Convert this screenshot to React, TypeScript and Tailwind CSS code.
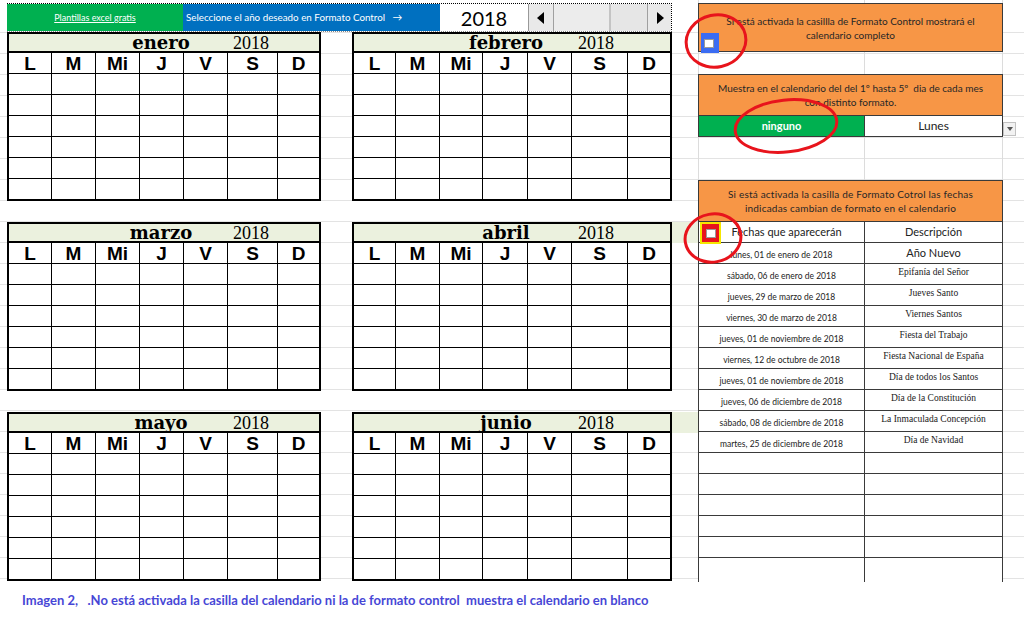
import React from 'react';

const days = ['L', 'M', 'Mi', 'J', 'V', 'S', 'D'];

const leftCols = 'grid-cols-[43px_44px_44px_44px_44px_50px_1fr]';
const rightCols = 'grid-cols-[42px_44px_43px_45px_44px_56px_1fr]';

const pairs: [string, string][] = [
  ['enero', 'febrero'],
  ['marzo', 'abril'],
  ['mayo', 'junio'],
];

const fechas: [string, string][] = [
  ['lunes, 01 de enero de 2018', 'Año Nuevo'],
  ['sábado, 06 de enero de 2018', 'Epifanía del Señor'],
  ['jueves, 29 de marzo de 2018', 'Jueves Santo'],
  ['viernes, 30 de marzo de 2018', 'Viernes Santos'],
  ['jueves, 01 de noviembre de 2018', 'Fiesta del Trabajo'],
  ['viernes, 12 de octubre de 2018', 'Fiesta Nacional de España'],
  ['jueves, 01 de noviembre de 2018', 'Día de todos los Santos'],
  ['jueves, 06 de diciembre de 2018', 'Día de la Constitución'],
  ['sábado, 08 de diciembre de 2018', 'La Inmaculada Concepción'],
  ['martes, 25 de diciembre de 2018', 'Día de Navidad'],
];

function MonthCal({ name, cols, width }: { name: string; cols: string; width: string }) {
  return (
    <div className={`border-2 border-black bg-white ${width}`}>
      {/* month header */}
      <div className="h-[19px] bg-[#ebf1de] border-b-2 border-black flex items-center">
        <div className="ml-[86px] w-[132px] text-center font-['DejaVu_Serif',serif] font-bold text-[18px] leading-none">
          {name}
        </div>
        <div className="pl-[6px] font-['Liberation_Serif',serif] text-[18px] leading-none">2018</div>
      </div>
      <div className={`grid ${cols} h-[21px] border-b border-black`}>
        {days.map((d, i) => (
          <div
            key={d}
            className={`flex items-center justify-center font-['Liberation_Sans',sans-serif] font-bold text-[19px] leading-none ${i < 6 ? 'border-r border-black' : ''}`}
          >
            {d}
          </div>
        ))}
      </div>
      {[0, 1, 2, 3, 4, 5].map((r) => (
        <div key={r} className={`grid ${cols} ${r < 5 ? 'h-[21px] border-b border-black' : 'h-[20px]'}`}>
          {days.map((d, i) => (
            <div key={d} className={i < 6 ? 'border-r border-black' : ''} />
          ))}
        </div>
      ))}
    </div>
  );
}

function TopBar() {
  return (
    <div className="flex h-[29px] w-[665px] border-t border-r border-black border-b border-b-[#888] border-dotted">
      <div className="w-[176px] bg-[#00b050] flex items-center justify-center">
        <span className="text-white text-[9px] underline">Plantillas excel gratis</span>
      </div>
      <div className="w-[257px] bg-[#0070c0] flex items-center pl-[3px]">
        <span className="text-white text-[9.8px]">Seleccione el año deseado en Formato Control&nbsp;&nbsp;&nbsp;→</span>
      </div>
      <div className="w-[88px] bg-white flex items-center justify-center text-[20px] leading-none text-black">2018</div>
      {/* scroll bar */}
      <div className="flex-1 flex bg-[#e2e2e2] border-l border-[#999]">
        <div className="w-[25px] bg-[#e9e9e9] border-r border-[#a0a0a0] flex items-center justify-center">
          <svg width="8" height="12" viewBox="0 0 8 12">
            <path d="M7 0 L0 6 L7 12 Z" fill="#000" />
          </svg>
        </div>
        <div className="w-[57px] bg-[#ececec] border-r-2 border-[#c4c4c4]" />
        <div className="flex-1 bg-[#e6e6e6]" />
        <div className="w-[24px] bg-[#e9e9e9] border-l border-[#a0a0a0] flex items-center justify-center">
          <svg width="8" height="12" viewBox="0 0 8 12">
            <path d="M1 0 L8 6 L1 12 Z" fill="#000" />
          </svg>
        </div>
      </div>
    </div>
  );
}

function RightPanel() {
  const orange = 'bg-[#f79646] border border-[#3a3a3a] flex items-center justify-center text-center text-[10px] leading-[14px] text-[#262626] whitespace-nowrap';
  return (
    <div className="w-[305px] pt-[3px] flex flex-col">
      <div className={`h-[49px] relative ${orange}`}>
        <div>
          Si está activada la casillla de Formato Control mostrará el
          <br />
          calendario completo
        </div>
        <div className="absolute left-[2px] top-[29px] w-[18px] h-[20px] bg-[#3b6cf2] flex items-center justify-center">
          <div className="w-[10px] h-[9px] bg-white border border-[#9a9a9a] -ml-[2px]" />
        </div>
      </div>
      <div className="h-[22px]" />
      <div className={`h-[42px] ${orange}`}>
        <div>
          Muestra en el calendario del del 1º hasta 5º&nbsp; dia de cada mes
          <br />
          con distinto formato.
        </div>
      </div>
      <div className="h-[21px] flex border-x border-b border-[#3a3a3a] relative">
        <div className="w-[166px] bg-[#00b050] border-r border-[#3a3a3a] flex items-center justify-center text-white font-bold text-[11px]">
          ninguno
        </div>
        <div className="flex-1 bg-white flex items-center justify-center text-[12px] text-[#222]">Lunes</div>
        <div className="absolute left-[304px] top-[6px] w-[13px] h-[14px] bg-[#f2f2f2] border border-[#c2c2c2] flex items-center justify-center">
          <svg width="6" height="4" viewBox="0 0 6 4">
            <path d="M0 0 L6 0 L3 4 Z" fill="#555" />
          </svg>
        </div>
      </div>
      <div className="h-[43px]" />
      <div className={`h-[42px] ${orange} text-[#3a2e12] tracking-[0.2px]`}>
        <div>
          Si está activada la casilla de Formato Cotrol las fechas
          <br />
          indicadas cambian de formato en el calendario
        </div>
      </div>
      {/* header row */}
      <div className="h-[21px] flex border-x border-b border-[#3a3a3a] bg-white relative">
        <div className="w-[166px] border-r border-[#3a3a3a] flex items-center justify-center text-[11px] text-[#222] pl-[10px]">
          Fechas que aparecerán
        </div>
        <div className="flex-1 flex items-center justify-center text-[11px] text-[#222]">Descripción</div>
        <div className="absolute left-[1px] top-0 w-[21px] h-[22px] bg-[#e8141c] border-2 border-[#f5e600] flex items-center justify-center">
          <div className="w-[10px] h-[9px] bg-white border border-[#9a9a9a]" />
        </div>
      </div>
      {fechas.map(([f, d], i) => (
        <div key={i} className="h-[21px] flex border-x border-b border-[#3a3a3a] bg-white">
          <div className="w-[166px] border-r border-[#3a3a3a] flex items-end justify-center pb-[1px] text-[8.5px] text-[#222] whitespace-nowrap">
            {f}
          </div>
          <div
            className={`flex-1 flex items-center justify-center whitespace-nowrap ${
              i === 0
                ? 'text-[11px] text-[#222]'
                : "font-['Liberation_Serif',serif] text-[9.5px] text-[#1a1a1a] pb-[3px]"
            }`}
          >
            {d}
          </div>
        </div>
      ))}
      {[0, 1, 2, 3, 4, 5].map((r) => (
        <div
          key={r}
          className={`flex border-x border-[#3a3a3a] bg-white ${r < 5 ? 'h-[21px] border-b' : 'h-[24px]'}`}
        >
          <div className="w-[166px] border-r border-[#3a3a3a]" />
          <div className="flex-1" />
        </div>
      ))}
    </div>
  );
}

export default function App() {
  return (
    <div className="w-[1024px] h-[642px] bg-white relative overflow-hidden font-['Lato',sans-serif]">
      <div className="h-[582px] flex bg-[linear-gradient(to_right,transparent_698px,#dcdcdc_698px,#dcdcdc_699px,transparent_699px,transparent_864px,#dcdcdc_864px,#dcdcdc_865px,transparent_865px,transparent_1002px,#dcdcdc_1002px,#dcdcdc_1003px,transparent_1003px),repeating-linear-gradient(to_bottom,transparent_0,transparent_20px,#e3e3e3_20px,#e3e3e3_21px)] bg-[position:0_0,0_12px]">
        <div className="w-[698px] pl-[7px] pt-[3px] flex flex-col">
          <TopBar />
          <div className="flex flex-col gap-[21px]">
            {pairs.map(([a, b], idx) => (
              <div key={a} className="flex">
                <MonthCal name={a} cols={leftCols} width="w-[314px]" />
                <div className="w-[31px]" />
                <MonthCal name={b} cols={rightCols} width="w-[320px]" />
                <div className="w-[26px]">
                  {idx > 0 && <div className="h-[21px] bg-[#ebf1de]" />}
                </div>
              </div>
            ))}
          </div>
        </div>
        <RightPanel />
      </div>
      <div className="pl-[22px] pt-[10px] text-[13px] leading-[16px] font-bold text-[#4747d6] whitespace-pre">
        {'Imagen 2,   .No está activada la casilla del calendario ni la de formato control  muestra el calendario en blanco'}
      </div>

      {/* red annotation ellipses */}
      <svg className="absolute left-0 top-0 pointer-events-none" width="1024" height="642" viewBox="0 0 1024 642">
        <ellipse cx="716" cy="41" rx="30" ry="26" transform="rotate(-12 716 41)" fill="none" stroke="#e8141c" strokeWidth="3" />
        <ellipse cx="786" cy="126" rx="51" ry="26" transform="rotate(-6 786 126)" fill="none" stroke="#e8141c" strokeWidth="3" />
        <ellipse cx="713" cy="238" rx="28" ry="24" transform="rotate(-10 713 238)" fill="none" stroke="#e8141c" strokeWidth="3" />
      </svg>
    </div>
  );
}
